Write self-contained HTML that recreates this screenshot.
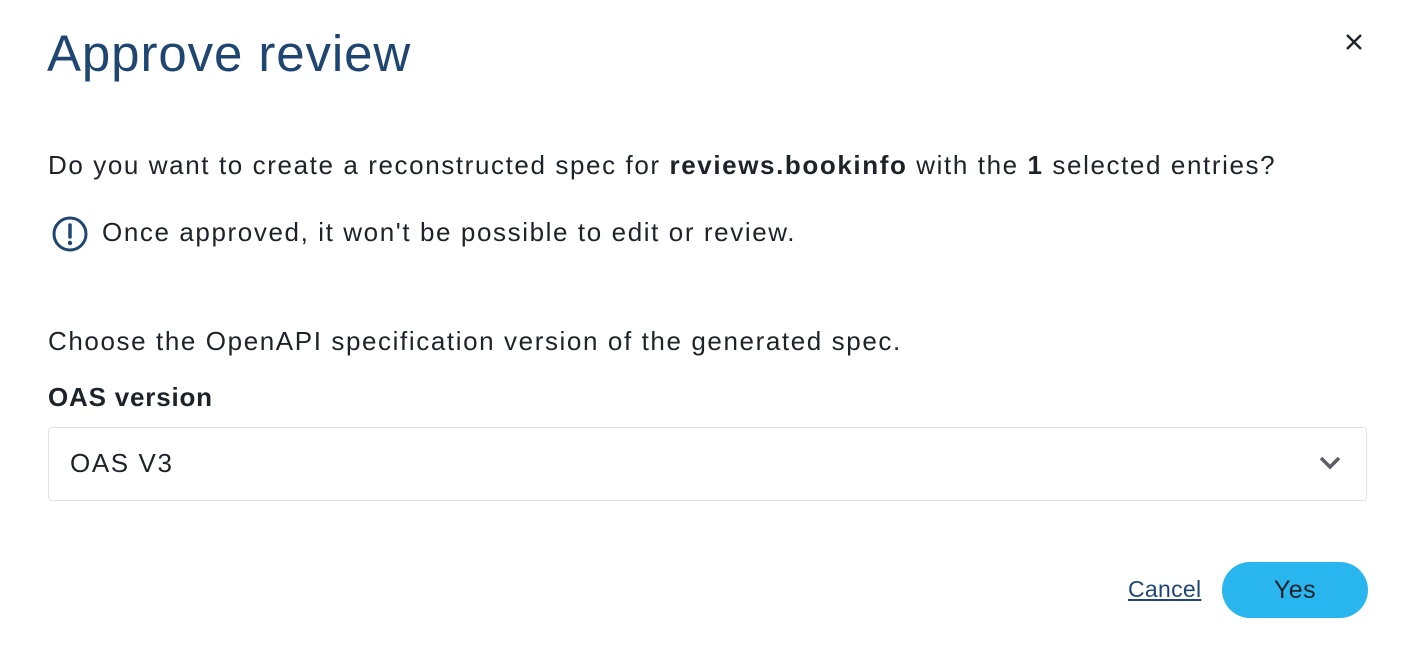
<!DOCTYPE html>
<html><head><style>
body{margin:0;width:1414px;height:660px;background:#fff;font-family:"Liberation Sans",Arial,sans-serif;color:#1e2229;position:relative;overflow:hidden}
.a{position:absolute;white-space:nowrap}
.t{font-size:26px;letter-spacing:1.6px}
</style></head><body>
<div class="a" style="left:47px;top:24px;font-size:51px;color:#1f4670;font-weight:300;letter-spacing:0.9px">Approve review</div>
<svg class="a" style="left:1345px;top:33px" width="18" height="18" viewBox="0 0 18 18"><path d="M2 2L16 16M16 2L2 16" stroke="#1e2229" stroke-width="2.4"/></svg>
<div class="a t" style="left:48px;top:150px">Do you want to create a reconstructed spec for <b>reviews.bookinfo</b> with the <b>1</b> selected entries?</div>
<svg class="a" style="left:51px;top:215px" width="38" height="38" viewBox="0 0 38 38"><circle cx="19" cy="19" r="16" fill="none" stroke="#1f4670" stroke-width="3"/><path d="M19 10V22" stroke="#1f4670" stroke-width="3.5" stroke-linecap="round"/><circle cx="19" cy="28" r="2.2" fill="#1f4670"/></svg>
<div class="a t" style="left:102px;top:217px">Once approved, it won't be possible to edit or review.</div>
<div class="a t" style="left:48px;top:326px">Choose the OpenAPI specification version of the generated spec.</div>
<div class="a t" style="left:48px;top:382px;font-weight:bold;letter-spacing:0.8px">OAS version</div>
<div class="a" style="left:48px;top:427px;width:1317px;height:72px;border:1px solid #dfe2e6;border-radius:4px"></div>
<div class="a t" style="left:70px;top:448px">OAS V3</div>
<svg class="a" style="left:1318px;top:455px" width="24" height="16" viewBox="0 0 24 16"><path d="M3 3L12 12L21 3" fill="none" stroke="#5b5e63" stroke-width="3.5"/></svg>
<div class="a" style="left:1128px;top:576px;font-size:23px;color:#1f4670;text-decoration:underline;letter-spacing:0.3px">Cancel</div>
<div class="a" style="left:1222px;top:562px;width:146px;height:56px;border-radius:28px;background:#29b6ef;text-align:center;line-height:56px;font-size:25px;letter-spacing:0.5px">Yes</div>
</body></html>
